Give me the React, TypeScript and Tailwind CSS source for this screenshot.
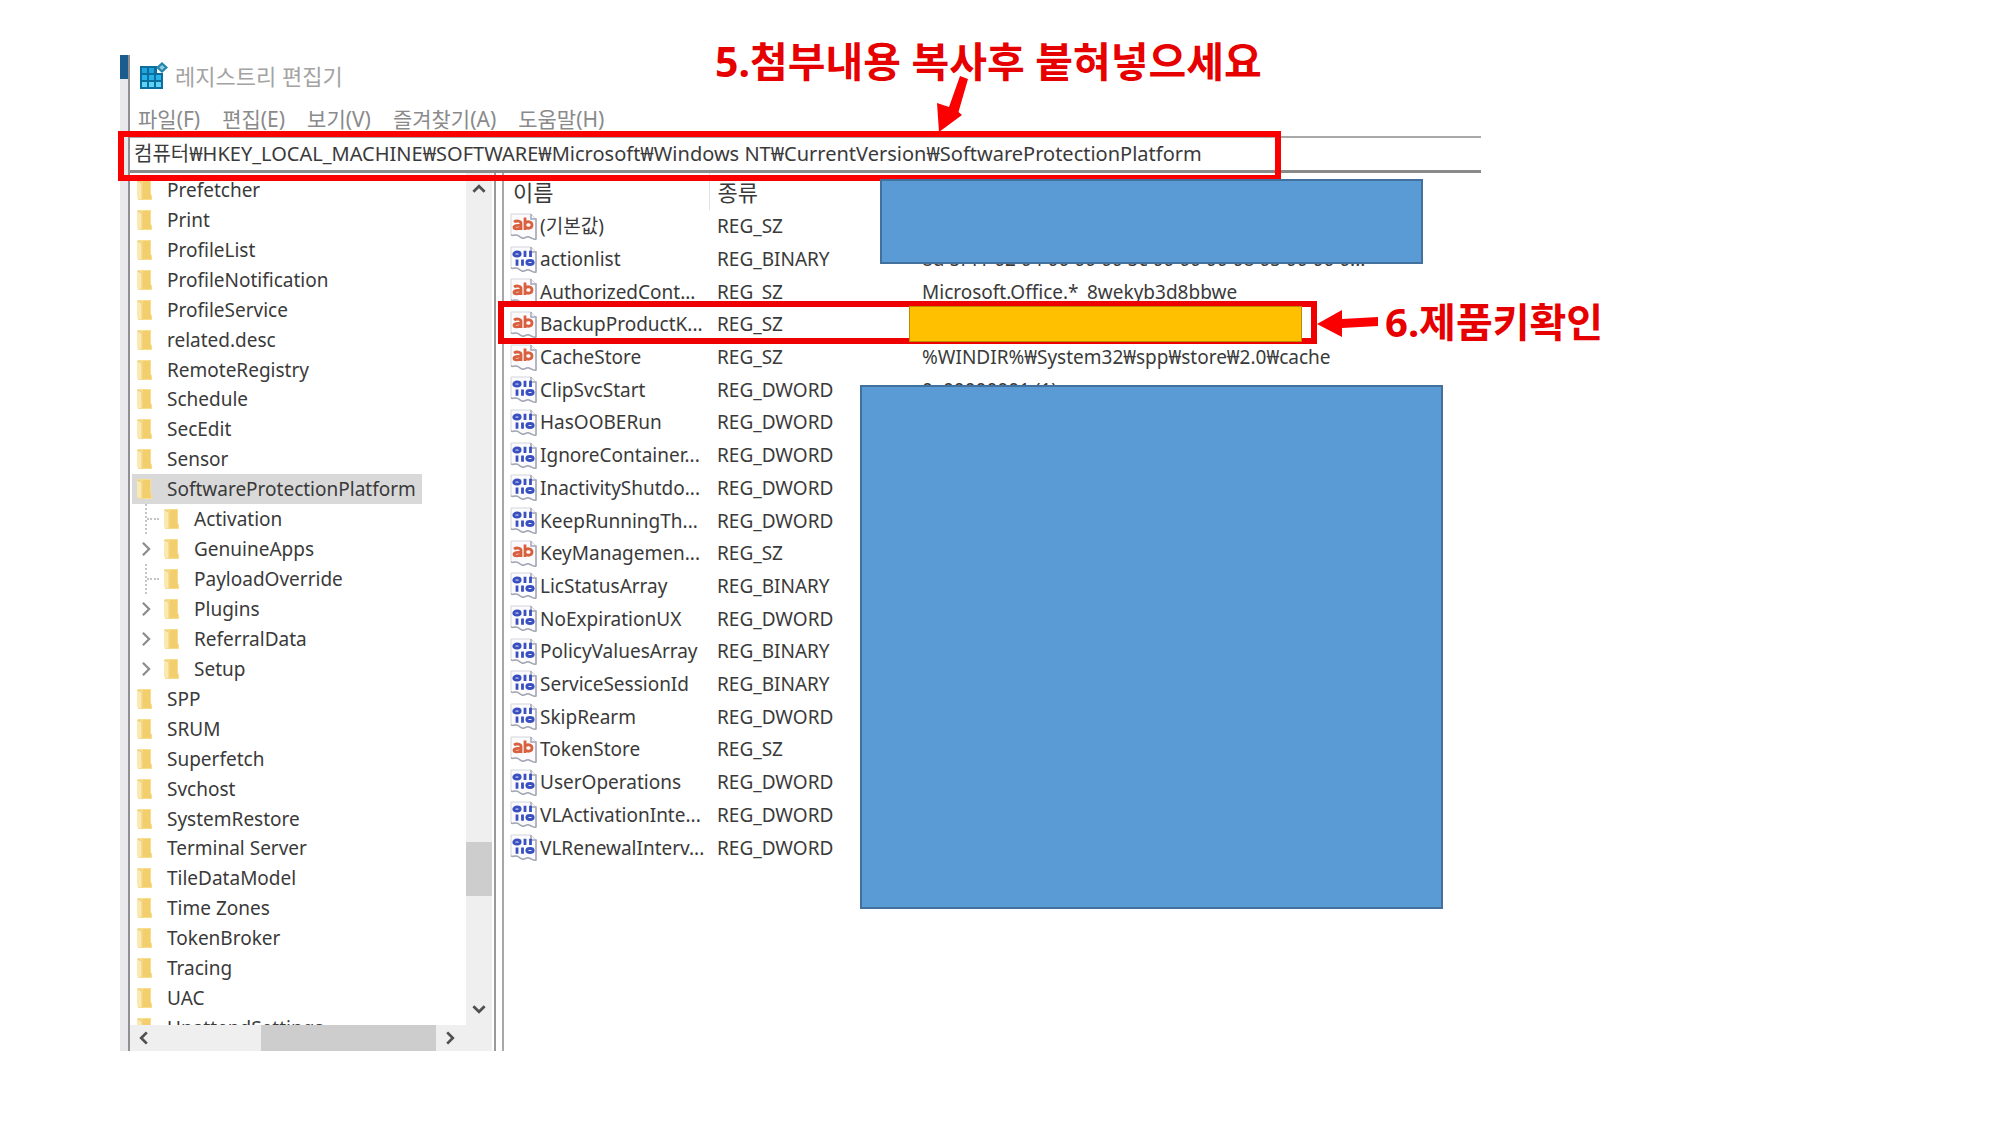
import React from 'react';

type ValueKind = 'text' | 'binary';

interface TreeItem {
  label: string;
  child?: boolean;
  expandable?: boolean;
  selected?: boolean;
}

interface RegistryValue {
  name: string;
  type: string;
  kind: ValueKind;
  data?: string;
}

const menuItems = ['파일(F)', '편집(E)', '보기(V)', '즐겨찾기(A)', '도움말(H)'];

const registryPath =
  '컴퓨터₩HKEY_LOCAL_MACHINE₩SOFTWARE₩Microsoft₩Windows NT₩CurrentVersion₩SoftwareProtectionPlatform';

const treeItems: TreeItem[] = [
  { label: 'Prefetcher' },
  { label: 'Print' },
  { label: 'ProfileList' },
  { label: 'ProfileNotification' },
  { label: 'ProfileService' },
  { label: 'related.desc' },
  { label: 'RemoteRegistry' },
  { label: 'Schedule' },
  { label: 'SecEdit' },
  { label: 'Sensor' },
  { label: 'SoftwareProtectionPlatform', selected: true },
  { label: 'Activation', child: true },
  { label: 'GenuineApps', child: true, expandable: true },
  { label: 'PayloadOverride', child: true },
  { label: 'Plugins', child: true, expandable: true },
  { label: 'ReferralData', child: true, expandable: true },
  { label: 'Setup', child: true, expandable: true },
  { label: 'SPP' },
  { label: 'SRUM' },
  { label: 'Superfetch' },
  { label: 'Svchost' },
  { label: 'SystemRestore' },
  { label: 'Terminal Server' },
  { label: 'TileDataModel' },
  { label: 'Time Zones' },
  { label: 'TokenBroker' },
  { label: 'Tracing' },
  { label: 'UAC' },
  { label: 'UnattendSettings' },
];

const values: RegistryValue[] = [
  { name: '(기본값)', type: 'REG_SZ', kind: 'text' },
  {
    name: 'actionlist',
    type: 'REG_BINARY',
    kind: 'binary',
    data: '8d 5f f1 02 04 00 00 00 5c 00 00 00 08 05 00 00 0...',
  },
  { name: 'AuthorizedCont...', type: 'REG_SZ', kind: 'text', data: 'Microsoft.Office.*_8wekyb3d8bbwe' },
  { name: 'BackupProductK...', type: 'REG_SZ', kind: 'text' },
  { name: 'CacheStore', type: 'REG_SZ', kind: 'text', data: '%WINDIR%₩System32₩spp₩store₩2.0₩cache' },
  { name: 'ClipSvcStart', type: 'REG_DWORD', kind: 'binary', data: '0x00000001 (1)' },
  { name: 'HasOOBERun', type: 'REG_DWORD', kind: 'binary' },
  { name: 'IgnoreContainer...', type: 'REG_DWORD', kind: 'binary' },
  { name: 'InactivityShutdo...', type: 'REG_DWORD', kind: 'binary' },
  { name: 'KeepRunningTh...', type: 'REG_DWORD', kind: 'binary' },
  { name: 'KeyManagemen...', type: 'REG_SZ', kind: 'text' },
  { name: 'LicStatusArray', type: 'REG_BINARY', kind: 'binary' },
  { name: 'NoExpirationUX', type: 'REG_DWORD', kind: 'binary' },
  { name: 'PolicyValuesArray', type: 'REG_BINARY', kind: 'binary' },
  { name: 'ServiceSessionId', type: 'REG_BINARY', kind: 'binary' },
  { name: 'SkipRearm', type: 'REG_DWORD', kind: 'binary' },
  { name: 'TokenStore', type: 'REG_SZ', kind: 'text' },
  { name: 'UserOperations', type: 'REG_DWORD', kind: 'binary' },
  { name: 'VLActivationInte...', type: 'REG_DWORD', kind: 'binary' },
  { name: 'VLRenewalInterv...', type: 'REG_DWORD', kind: 'binary' },
];

const RegeditIcon = () => (
  <svg viewBox="0 0 28 28" className="size-7 shrink-0" aria-hidden="true">
    <path d="M0 4h17v7h6v16H0z" fill="#0b6e9c" />
    <g fill="#1fa5dc">
      <path d="M2 6h5v5H2zM9 6h5v5H9z" />
      <path d="M2 13h5v5H2zM9 13h5v5H9zM16 13h5v5h-5z" fill="#25b3ea" />
      <path d="M2 20h5v5H2zM9 20h5v5H9zM16 20h5v5h-5z" fill="#5fd2f7" />
    </g>
    <path d="M22 0l6 5.500-6 5.500-6-5.500z" fill="#2683ab" />
    <path d="M22 3l2.800 2.500L22 8l-2.800-2.500z" fill="#8ccbe2" />
  </svg>
);

const FolderIcon = () => (
  <svg viewBox="0 0 17 22" className="h-[22px] w-[17px] shrink-0" aria-hidden="true">
    <path d="M2 1h13v14l1 2v4H2z" fill="#f7dd8c" />
    <path d="M7 2h7v13l1 2v3H7z" fill="#f2cf6c" />
    <path d="M1 2l5 2v17l-5-2z" fill="#fbe9b0" />
    <path d="M1 2l5 2v17" fill="none" stroke="#e6c874" strokeWidth="0.800" />
  </svg>
);

const ValueIcon = ({ kind }: { kind: ValueKind }) => (
  <svg viewBox="0 0 27 27" className="size-[27px] shrink-0" aria-hidden="true">
    <path d="M1 1h20l5 5v20c-3 1-4-1-7-2s-4 2-7 1-3-3-6-3-3 1-5 0z" fill="#fbfbfd" stroke="#d3d5dc" />
    <path d="M21 1v5h5v20c-3 1-4-1-7-2s-4 2-7 1-3-3-6-3-3 1-5 0" fill="none" stroke="#a3a7b4" strokeWidth="1.500" />
    {kind === 'text' ? (
      <g fill="none" stroke="#d9603f" strokeWidth="2.800">
        <path d="M4 9c2-1.500 7-1.500 7 1.500V17M11 12.500c-4-.5-7 0-7 1.800s4.500 2.500 7 0" />
        <path d="M15 4.500V17M15 10.500c1.500-2.500 7-2.500 7 1.500s-5.500 4-7 1.500" />
      </g>
    ) : (
      <g fill="none" stroke="#3a4fc0" strokeWidth="2.800">
        <ellipse cx="7" cy="8" rx="3.200" ry="2" />
        <path d="M15 4.800v6.200M20.500 4.800v6.200M7 13.500v6.200M12.500 13.500v6.200" />
        <ellipse cx="20" cy="16.500" rx="3.200" ry="2" />
      </g>
    )}
  </svg>
);

const chevronPaths = {
  up: 'M3 10.500l5-5 5 5',
  down: 'M3 5.500l5 5 5-5',
  left: 'M10.500 3l-5 5 5 5',
  right: 'M5.500 3l5 5-5 5',
};

const Chevron = ({ direction, thin }: { direction: keyof typeof chevronPaths; thin?: boolean }) => (
  <svg viewBox="0 0 16 16" className={`shrink-0 ${thin ? 'size-5' : 'size-[18px]'}`} aria-hidden="true">
    <path
      d={chevronPaths[direction]}
      fill="none"
      stroke={thin ? '#8d8d8d' : '#505050'}
      strokeWidth={thin ? 1.8 : 2.4}
    />
  </svg>
);

const TreeRow = ({ item }: { item: TreeItem }) => (
  <li className="flex items-stretch">
    {item.child && (
      <span className="flex w-[27px] shrink-0 items-center justify-center">
        {item.expandable ? (
          <Chevron direction="right" thin />
        ) : (
          <span className="ml-[13px] flex h-full flex-1 items-center border-l-2 border-dotted border-[#c4c4c4]">
            <span className="w-3 border-t-2 border-dotted border-[#c4c4c4]" />
          </span>
        )}
      </span>
    )}
    <button
      type="button"
      className={`flex items-center gap-[14px] pr-[6px] pl-1 whitespace-nowrap ${
        item.selected ? 'bg-[#d9d9d9]' : ''
      }`}
    >
      <FolderIcon />
      {item.label}
    </button>
  </li>
);

const RegistryTree = () => (
  <div className="flex w-[366px] shrink-0 flex-col border-r-2 border-[#9a9a9a] pr-[2px]">
    <div className="flex h-[852px]">
      <div className="min-w-0 flex-1 overflow-hidden pt-[2px] pl-[2px]">
        <ul className="grid h-[868px] auto-rows-fr">
          {treeItems.map((item) => (
            <TreeRow key={item.label} item={item} />
          ))}
        </ul>
      </div>
      <div className="flex w-[26px] flex-col items-center bg-[#efefef]">
        <button type="button" aria-label="위로" className="flex h-8 items-center">
          <Chevron direction="up" />
        </button>
        <div className="flex w-full flex-1 flex-col">
          <div className="flex-[637]" />
          <div className="h-[54px] bg-[#cdcdcd]" />
          <div className="flex-[97]" />
        </div>
        <button type="button" aria-label="아래로" className="flex h-8 items-center">
          <Chevron direction="down" />
        </button>
      </div>
    </div>
    <div className="flex h-[26px] items-center bg-[#efefef] pr-7">
      <button type="button" aria-label="왼쪽으로" className="flex w-7 justify-center">
        <Chevron direction="left" />
      </button>
      <div className="flex h-full flex-1">
        <div className="ml-auto h-full w-[175px] bg-[#cdcdcd]" />
      </div>
      <button type="button" aria-label="오른쪽으로" className="flex w-7 justify-center">
        <Chevron direction="right" />
      </button>
    </div>
  </div>
);

const ValueTable = () => (
  <div className="ml-[6px] min-w-0 flex-1 border-l-2 border-[#a8a8a8]">
    <table className="h-[691px] w-full table-fixed border-collapse text-left whitespace-nowrap">
      <colgroup>
        <col className="w-[205px]" />
        <col className="w-[205px]" />
        <col />
      </colgroup>
      <thead className="text-[22px]">
        <tr className="h-[37px]">
          <th className="border-r border-[#e2e2e2] p-0 pl-[9px] font-normal">이름</th>
          <th className="p-0 pl-2 font-normal">종류</th>
          <th className="p-0 pl-2 font-normal">데이터</th>
        </tr>
      </thead>
      <tbody>
        {values.map((value) => (
          <tr key={value.name}>
            <td className="p-0 pl-[6px]">
              <span className="flex items-center gap-[3px]">
                <ValueIcon kind={value.kind} />
                {value.name}
              </span>
            </td>
            <td className="p-0 pl-2">{value.type}</td>
            <td className="p-0 pl-2">{value.data}</td>
          </tr>
        ))}
      </tbody>
    </table>
  </div>
);

const RegistryEditor = () => (
  <section className="flex w-full max-w-[1361px]">
    <div className="flex w-2 shrink-0 flex-col bg-[#e9e9ec]">
      <div className="h-6 bg-[#1b5c8f]" />
    </div>
    <div className="min-w-0 flex-1">
      <div className="border-l-2 border-[#8f8f94]">
        <header className="flex h-[42px] items-center gap-[7px] pl-[10px] text-[22px] text-[#a3a3a3]">
          <RegeditIcon />
          <h1>레지스트리 편집기</h1>
        </header>
        <nav className="flex h-[39px] items-center gap-[22px] pt-1 pl-2 text-[21px] text-[#8a8a8a]">
          {menuItems.map((item) => (
            <button key={item} type="button" className="whitespace-nowrap">
              {item}
            </button>
          ))}
        </nav>
        <div className="flex h-[37px] items-center border-t-2 border-b-3 border-t-[#a9a9a9] border-b-[#8a8a8a] pl-1">
          <input
            type="text"
            aria-label="경로"
            defaultValue={registryPath}
            className="h-8 w-full bg-transparent text-[20px] leading-8 outline-none"
          />
        </div>
        <div className="flex">
          <RegistryTree />
          <ValueTable />
        </div>
      </div>
    </div>
  </section>
);

// Red notes, frames and cover blocks that lie over the window
const Annotations = () => (
  <>
    <div className="absolute top-[131px] left-[118px] h-[50px] w-[1163px] border-6 border-[#fb0000]" />
    <div className="absolute top-[301px] left-[498px] h-[43px] w-[819px] border-6 border-[#ee0000]" />
    <div className="absolute top-[179px] left-[880px] h-[85px] w-[543px] border-2 border-[#41719c] bg-[#5b9bd5]" />
    <div className="absolute top-[306px] left-[909px] h-[36px] w-[393px] border border-[#bc8c00] bg-[#ffc000]" />
    <div className="absolute top-[385px] left-[860px] h-[524px] w-[583px] border-2 border-[#41719c] bg-[#5b9bd5]" />
    <svg viewBox="0 0 34 58" className="absolute top-[75px] left-[935px] h-[58px] w-[34px]" aria-hidden="true">
      <path d="M25 1l8 3-9.500 33 3.500 3-23 17L2 28l12 4z" fill="#fb0000" />
    </svg>
    <svg viewBox="0 0 64 30" className="absolute top-[309px] left-[1316px] h-[30px] w-[64px]" aria-hidden="true">
      <path d="M1 15L26 1v9l36-2v9l-36 2v9z" fill="#fb0000" />
    </svg>
    <p className="absolute top-[32px] left-[715px] text-[41px] leading-[58px] font-bold whitespace-nowrap text-[#e60000]">
      5.첨부내용 복사후 붙혀넣으세요
    </p>
    <p className="absolute top-[293px] left-[1385px] text-[40px] leading-[58px] font-bold whitespace-nowrap text-[#e60000]">
      6.제품키확인
    </p>
  </>
);

const App: React.FC = () => {
  return (
    <main className="relative min-h-screen bg-white pt-[55px] pl-[120px] font-['Noto_Sans','Noto_Sans_CJK_KR',sans-serif] text-[19px] leading-6 text-[#3a3a3a]">
      <RegistryEditor />
      <Annotations />
    </main>
  );
};

export default App;
